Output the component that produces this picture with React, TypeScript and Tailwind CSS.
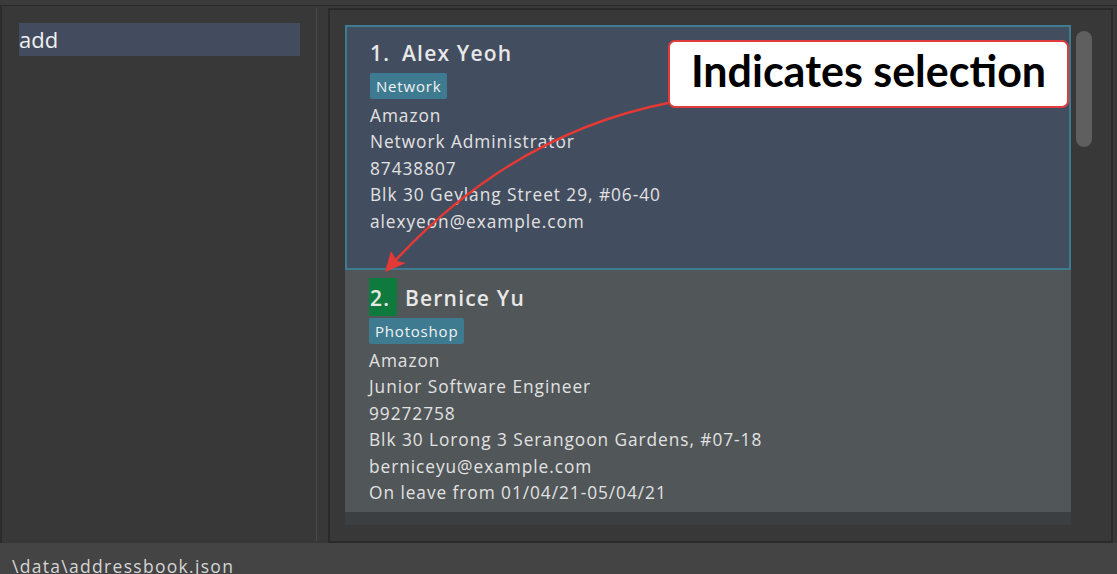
import React from 'react'

const details1 = [
  'Amazon',
  'Network Administrator',
  '87438807',
  'Blk 30 Geylang Street 29, #06-40',
  'alexyeon@example.com',
]

const details2 = [
  'Amazon',
  'Junior Software Engineer',
  '99272758',
  'Blk 30 Lorong 3 Serangoon Gardens, #07-18',
  'berniceyu@example.com',
  'On leave from 01/04/21-05/04/21',
]

function Tag({ label }: { label: string }) {
  return (
    <div className="flex">
      <span className="flex h-[26px] items-center rounded-[2px] bg-[#3e7b91] px-[6px] text-[15px] tracking-[0.8px] text-[#f2f2f2]">
        {label}
      </span>
    </div>
  )
}

function Details({ lines }: { lines: string[] }) {
  return (
    <div className="mt-[4px] text-[17.3px] leading-[26.4px] tracking-[0.95px] text-[#e2e2e2]">
      {lines.map((l) => (
        <div key={l} className="whitespace-nowrap">
          {l}
        </div>
      ))}
    </div>
  )
}

export default function App() {
  return (
    <div className="relative flex h-[574px] w-[1117px] flex-col overflow-hidden bg-[#383838] font-['Open_Sans',sans-serif]">
      {/* top strip */}
      <div className="h-[6px] shrink-0 border-b border-[#2a2a2a] bg-[#3b3b3b]" />

      <div className="flex min-h-0 flex-1">
        {/* cut-off window edge */}
        <div className="w-[2px] shrink-0 bg-[#2c2c2c]" />

        {/* command panel */}
        <div className="w-[314px] shrink-0 pl-[17px] pt-[17px]">
          <div className="flex h-[33px] w-[281px] items-center bg-[#434c5f] text-[22px] leading-[33px] text-[#f0f0f0]">
            add
          </div>
        </div>

        <div className="mt-[2px] mb-[2px] w-px shrink-0 bg-[#4a4a4a]" />

        {/* person list panel */}
        <div className="ml-[11px] mt-[2px] flex w-[785px] shrink-0 border-2 border-[#2a2a2a] pl-[15px] pt-[15px] pb-[16px]">
          <div className="flex w-[726px] shrink-0 flex-col overflow-hidden">
            <div className="h-[245px] shrink-0 border-2 border-[#3e7b91] bg-[#424d5f] pl-[23px] pt-[6px]">
              <div className="flex h-[38px] items-center text-[21px] font-semibold tracking-[1.2px] text-[#e8e8e8]">
                <span className="w-[32px] pt-[4px]">1.</span>
                <span className="pt-[4px]">Alex Yeoh</span>
              </div>
              <div className="mt-[2px]">
                <Tag label="Network" />
              </div>
              <Details lines={details1} />
            </div>

            <div className="h-[242px] shrink-0 bg-[#515658] pl-[24px] pt-[8px]">
              <div className="flex h-[38px] items-center text-[21px] font-semibold tracking-[1.2px] text-[#e8e8e8]">
                <span className="flex h-[38px] w-[28px] items-center bg-[#0e7a3e] pl-px pt-[4px]">2.</span>
                <span className="ml-[8px] pt-[4px]">Bernice Yu</span>
              </div>
              <div className="mt-[2px]">
                <Tag label="Photoshop" />
              </div>
              <Details lines={details2} />
            </div>

            <div className="h-[40px] shrink-0 bg-[#3c3f41]" />
          </div>

          {/* scrollbar */}
          <div className="ml-[5px] w-[16px] shrink-0 pt-[6px]">
            <div className="h-[116px] w-[16px] rounded-full bg-[#5f5f5f]" />
          </div>
        </div>
      </div>

      {/* status bar */}
      <div className="h-[31px] shrink-0 bg-[#444444] pl-[12px] pt-[10px] text-[17.5px] leading-[26px] tracking-[1.3px] text-[#d6d6d6]">
        \data\addressbook.json
      </div>

      {/* annotation */}
      <div className="absolute left-[668px] top-[40px] flex h-[68px] w-[401px] items-center justify-center rounded-[7px] border-2 border-[#e23b3b] bg-white pb-[5px] font-['Lato',sans-serif] text-[43px] font-bold text-black">
        Indicates selection
      </div>
      <svg className="pointer-events-none absolute left-0 top-0" width="1117" height="574" viewBox="0 0 1117 574">
        <path d="M668 103 Q512 134 394 262" fill="none" stroke="#e53935" strokeWidth="2.5" />
        <polygon points="385,272 391,251 397,261 406,263" fill="#e53935" />
      </svg>
    </div>
  )
}
